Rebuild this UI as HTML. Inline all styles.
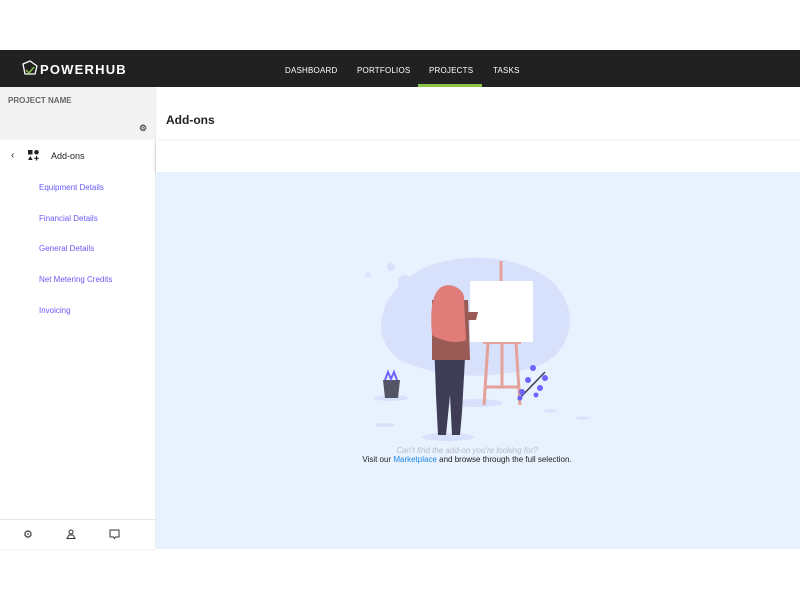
<!DOCTYPE html>
<html><head><meta charset="utf-8"><style>
*{margin:0;padding:0;box-sizing:border-box}
body{width:800px;height:600px;background:#fff;font-family:"Liberation Sans",sans-serif;position:relative;overflow:hidden}
.nav{position:absolute;top:50px;left:0;width:800px;height:37px;background:#212121}
.logo{position:absolute;left:40px;top:12px;color:#fff;font-size:13px;font-weight:bold;letter-spacing:1.2px}
.nav a{position:absolute;top:16px;color:#fff;font-size:8px;text-decoration:none;letter-spacing:.2px}
.ul{position:absolute;left:418px;top:34px;width:64px;height:3px;background:#8bc34a}
.side{position:absolute;left:0;top:87px;width:155px;height:462px;background:#fff;box-shadow:1px 0 3px rgba(0,0,0,.12)}
.sh{height:53px;background:#f3f3f3;position:relative}
.sh span{position:absolute;left:8px;top:9px;font-size:8px;color:#666;font-weight:bold}
.item{position:absolute;left:39px;font-size:8px;color:#6a5af9}
.bot{position:absolute;left:0;top:519px;width:155px;height:30px;border-top:1px solid #e6e6e6;background:#fff}
.main{position:absolute;left:156px;top:87px;width:644px;height:462px;background:#fff}
.title{position:absolute;left:10px;top:26px;font-size:12px;color:#222;font-weight:bold}
.card{position:absolute;left:0;top:54px;width:644px;height:31px;background:#fff;box-shadow:0 1px 4px rgba(0,0,0,.2)}
.blue{position:absolute;left:0;top:85px;width:644px;height:377px;background:#e8f1fe}
</style></head><body>
<div class="nav">
<svg style="position:absolute;left:20px;top:9px" width="20" height="20" viewBox="0 0 20 20"><path d="M3 5 L10 2 L17 7 L15 15 L5 15 Z" fill="none" stroke="#fff" stroke-width="1.3"/><path d="M6 11 L9 14 L14 8" fill="none" stroke="#8bc34a" stroke-width="1.5"/></svg>
<div class="logo">POWERHUB</div>
<a style="left:285px">DASHBOARD</a><a style="left:357px">PORTFOLIOS</a><a style="left:429px">PROJECTS</a><a style="left:493px">TASKS</a>
<div class="ul"></div>
</div>
<div class="side">
<div class="sh"><span>PROJECT NAME</span><span style="left:139px;top:36px;font-size:9px;color:#555">⚙</span></div>
<div style="position:absolute;left:11px;top:63px;font-size:10px;color:#222">‹</div>
<svg style="position:absolute;left:28px;top:63px" width="11" height="11" viewBox="0 0 11 11"><rect x="0" y="0" width="4.5" height="4.5" fill="#222"/><circle cx="8.5" cy="2.3" r="2.3" fill="#222"/><path d="M0 10 L2.3 6 L4.6 10Z" fill="#222"/><path d="M8.5 6v4.5M6.2 8.3h4.6" stroke="#222" stroke-width="1.2"/></svg>
<div style="position:absolute;left:51px;top:64px;font-size:9px;color:#222">Add-ons</div>
<div class="item" style="top:96px">Equipment Details</div>
<div class="item" style="top:127px">Financial Details</div>
<div class="item" style="top:157px">General Details</div>
<div class="item" style="top:188px">Net Metering Credits</div>
<div class="item" style="top:219px">Invoicing</div>
</div>
<div class="bot">
<span style="position:absolute;left:23px;top:8px;font-size:11px;color:#333">⚙</span>
<svg style="position:absolute;left:66px;top:9px" width="10" height="10" viewBox="0 0 10 10"><circle cx="5" cy="3" r="2" fill="none" stroke="#333"/><path d="M1 9.5h8L7 6H3Z" fill="none" stroke="#333"/></svg>
<svg style="position:absolute;left:109px;top:9px" width="11" height="11" viewBox="0 0 11 11"><path d="M1 1h9v7H6.5L5.5 9.5 4.5 8H1Z" fill="none" stroke="#333"/></svg>
</div>
<div class="main">
<div class="title">Add-ons</div>
<div class="card"></div>
<div class="blue">
<svg style="position:absolute;left:194px;top:78px" width="250" height="200" viewBox="350 250 250 200">
<path d="M420 270 C460 250 520 255 550 280 C580 305 575 350 540 365 C500 380 440 380 400 360 C370 340 375 295 420 270Z" fill="#d7e1fc"/>
<circle cx="391" cy="267" r="4" fill="#d7e1fc"/><circle cx="405" cy="282" r="7" fill="#d7e1fc"/><circle cx="368" cy="275" r="2.5" fill="#d7e1fc"/>
<ellipse cx="475" cy="403" rx="28" ry="4" fill="#d7e1fc"/><ellipse cx="448" cy="437" rx="26" ry="4" fill="#d7e1fc"/><ellipse cx="391" cy="398" rx="17" ry="3" fill="#d7e1fc"/><ellipse cx="385" cy="425" rx="10" ry="2" fill="#d7e1fc"/><ellipse cx="550" cy="411" rx="7" ry="1.5" fill="#d7e1fc"/><ellipse cx="582" cy="418" rx="7" ry="1.5" fill="#d7e1fc"/>
<path d="M501 261v22M488 343l-4 62M516 343l4 62M502 343v45M486 387h32" stroke="#e3a19a" stroke-width="3" fill="none"/>
<rect x="483" y="340" width="38" height="4" fill="#e3a19a"/>
<rect x="470" y="281" width="63" height="61" fill="#fff"/>
<path d="M434 340 L466 340 L462 412 L460 435 L452 435 L450 395 L446 435 L438 435 L436 395Z" fill="#3f3d56"/>
<path d="M432 300 L468 300 L470 360 L432 360Z" fill="#9a5a55"/>
<path d="M468 312 L478 312 L476 320 L466 320Z" fill="#9a5a55"/>
<path d="M440 288 C450 280 466 290 464 300 L466 340 C455 345 440 340 432 335 C430 310 432 295 440 288Z" fill="#e07d79"/>
<path d="M383 380 L400 380 L398 398 L385 398Z" fill="#535465"/>
<path d="M385 380 L388 372 L391 379 L394 372 L397 380" stroke="#6c63ff" stroke-width="2" fill="none"/>
<path d="M518 400 L545 372" stroke="#3f3d56" stroke-width="1.5"/>
<g fill="#6c63ff"><circle cx="533" cy="368" r="3"/><circle cx="545" cy="378" r="3"/><circle cx="528" cy="380" r="3"/><circle cx="540" cy="388" r="3"/><circle cx="522" cy="392" r="3"/><circle cx="536" cy="395" r="2.5"/><circle cx="520" cy="398" r="2.5"/></g>
</svg>
<div style="position:absolute;left:-11px;width:644px;text-align:center;top:274px;font-size:8px;color:#b8bcc4;font-style:italic">Can't find the add-on you're looking for?</div>
<div style="position:absolute;left:-11px;width:644px;text-align:center;top:283px;font-size:8px;color:#222">Visit our <span style="color:#1e88e5">Marketplace</span> and browse through the full selection.</div>
</div>
</div>
</body></html>
